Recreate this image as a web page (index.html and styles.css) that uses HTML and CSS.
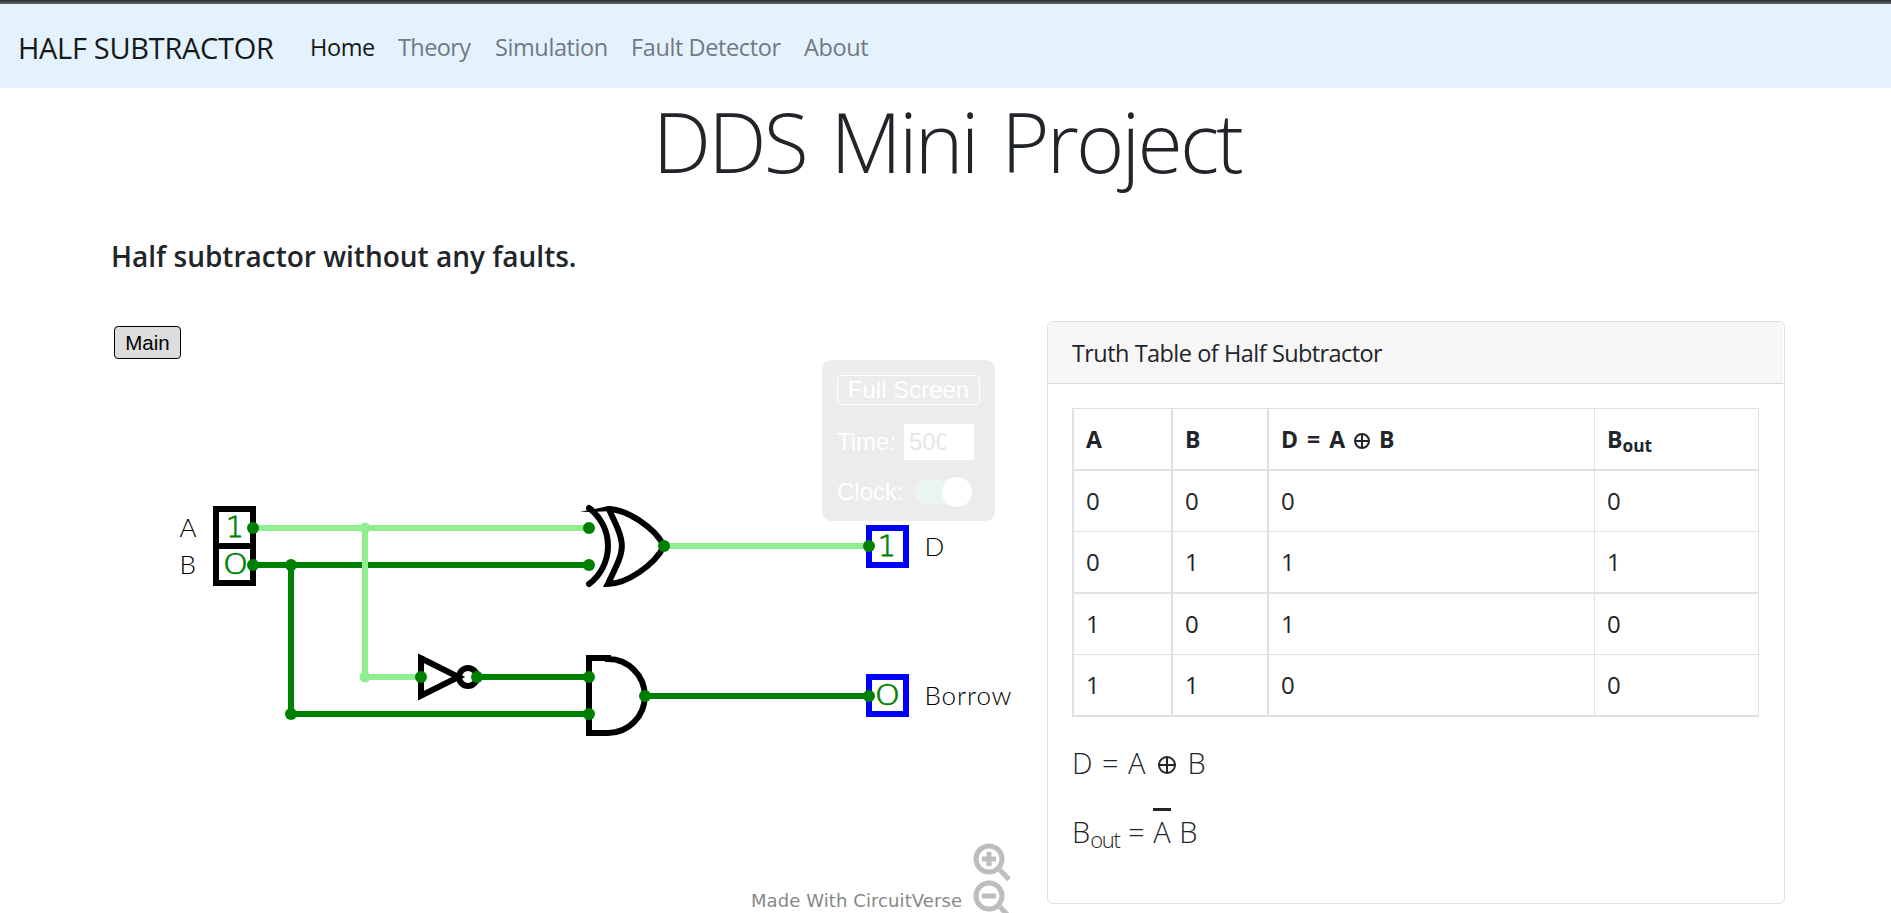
FILE: index.html
```html
<!DOCTYPE html>
<html lang="en">
<head>
<meta charset="utf-8">
<title>Half Subtractor</title>
<link rel="stylesheet" href="styles.css">
</head>
<body>
<nav class="navbar">
  <a class="brand">HALF SUBTRACTOR</a>
  <a class="link active l-home">Home</a>
  <a class="link l-theory">Theory</a>
  <a class="link l-sim">Simulation</a>
  <a class="link l-fault">Fault Detector</a>
  <a class="link l-about">About</a>
</nav>
<h1 class="title"><span>DDS Mini Project</span></h1>
<h2 class="subtitle">Half subtractor without any faults.</h2>
<main class="row">
  <section class="sim">
    <svg class="circuit" width="925" height="592" viewBox="105 321 925 592">
      <g class="wire on">
        <path d="M253 528H589M664 546H869"/>
      </g>
      <g class="wire off">
        <path d="M253 565H589M291 565V714H589M477 677H589M645 696H869"/>
      </g>
      <path class="wire on" d="M365 528V677H421"/>
      <g class="shape">
        <path d="M216 509H253V546H216ZM216 546H253V583H216Z"/>
        <path d="M421 658.3L458.5 677L421 695.7Z"/>
        <circle cx="468" cy="677" r="9"/>
        <path d="M607.8 509C626.5 509 654.6 527.5 664 546C654.6 565 626.5 584 607.8 584C626.5 546 626.5 546 607.8 507"/>
        <path class="round" d="M589 508A47.5 47.5 0 0 1 589 584"/>
        <path d="M611 658H589V733H608A36.8 37 0 0 0 608 659H605"/>
      </g>
      <path d="M580 511.8L595 509L608 506L612 511L592 512Z"/>
      <path class="out" d="M869 528H906V565H869ZM869 677H906V714H869Z"/>
      <g class="dot">
        <circle cx="253" cy="528" r="6"/><circle cx="253" cy="565" r="6"/><circle cx="291" cy="565" r="6"/><circle cx="291" cy="714" r="6"/>
        <circle cx="421" cy="677" r="6"/><circle cx="477" cy="677" r="6"/><circle cx="589" cy="528" r="6"/><circle cx="589" cy="565" r="6"/>
        <circle cx="664" cy="546" r="6"/><circle cx="589" cy="677" r="6"/><circle cx="589" cy="714" r="6"/><circle cx="645" cy="696" r="6"/>
        <circle cx="869" cy="546" r="6"/><circle cx="869" cy="696" r="6"/>
      </g>
      <g class="dot-on"><circle cx="365" cy="528" r="5.5"/><circle cx="365" cy="677" r="5.5"/></g>
      <g class="name">
        <text x="179.5" y="537">A</text><text x="179.5" y="574">B</text>
        <text x="924.5" y="556">D</text><text x="924.5" y="705" textLength="87">Borrow</text>
      </g>
      <g class="bit">
        <text x="226" y="537">1</text><text x="878" y="556">1</text>
      </g>
      <g class="bit zero">
        <text x="224" y="574" textLength="23" lengthAdjust="spacingAndGlyphs">0</text>
        <text x="876" y="705" textLength="23" lengthAdjust="spacingAndGlyphs">0</text>
      </g>
      <g class="lens">
        <circle cx="989" cy="859" r="13"/><path d="M982 859H996M989 852V866M1000 870L1009 879.500"/>
        <circle cx="989" cy="896" r="13"/><path d="M982 896H996M1000 907L1009 916.500"/>
      </g>
      <text class="credit" x="751" y="907" textLength="211">Made With CircuitVerse</text>
    </svg>
    <button class="tab">Main</button>
    <div class="panel">
      <div class="full">Full Screen</div>
      <div class="line time"><span>Time:</span><div class="input"><div class="value">500</div></div></div>
      <div class="line clock"><span>Clock:</span><div class="toggle"><div class="knob"></div></div></div>
    </div>
  </section>
  <section class="card">
    <header class="card-head"><span>Truth Table of Half Subtractor</span></header>
    <div class="card-body">
      <table class="truth">
        <tr class="r0"><th>A</th><th>B</th><th>D = A <i class="xor"></i> B</th><th>B<sub>out</sub></th></tr>
        <tr class="r1"><td>0</td><td>0</td><td>0</td><td>0</td></tr>
        <tr class="r2"><td>0</td><td>1</td><td>1</td><td>1</td></tr>
        <tr class="r1"><td>1</td><td>0</td><td>1</td><td>0</td></tr>
        <tr class="r2"><td>1</td><td>1</td><td>0</td><td>0</td></tr>
      </table>
      <p class="formula">D = A <i class="xor"></i> B</p>
      <p class="formula borrow">B<sub>out</sub> = <span class="bar">A</span> B</p>
    </div>
  </section>
</main>
</body>
</html>
```
FILE: styles.css
```css
* { box-sizing: border-box; }
body {
  margin: 0;
  height: 913px;
  overflow: hidden;
  background: #fff;
  color: #212529;
  font-family: "Open Sans", "Noto Sans", sans-serif;
  font-size: 24px;
}
.navbar {
  height: 88px;
  border-top: 2px solid #35363a;
  box-shadow: inset 0 2px #5a5b5f;
  background: #e3f2fd;
  display: flex;
  align-items: flex-start;
  padding: 26px 0 0 18px;
  white-space: nowrap;
}
.brand { width: 292px; font-size: 29px; line-height: 39px; letter-spacing: -0.3px; color: #161819; }
.link { font-size: 23.5px; line-height: 39px; color: #717a80; letter-spacing: -0.4px; }
.active { color: #16181a; }
.l-home { width: 88px; }
.l-theory { width: 97px; letter-spacing: -0.6px; }
.l-sim { width: 136px; }
.l-fault { width: 173px; }
.title {
  margin: 0;
  height: 150px;
  padding: 3px 0 0 3px;
  text-align: center;
  font-size: 82.5px;
  font-weight: 300;
  line-height: 100px;
  letter-spacing: -2.8px;
  word-spacing: 6px;
}
.subtitle {
  margin: 0;
  height: 83px;
  padding-left: 111px;
  font-size: 28px;
  font-weight: 600;
  line-height: 36px;
}
.row { display: flex; align-items: flex-start; }
.sim { position: relative; margin-left: 105px; width: 942px; height: 592px; }
.circuit { display: block; }
.wire { fill: none; stroke-width: 6; }
.on { stroke: #90ee90; }
.off { stroke: #008000; }
.shape { fill: none; stroke: #000; stroke-width: 6; }
.round { stroke-linecap: round; }
.out { fill: none; stroke: #00f; stroke-width: 6; }
.dot { fill: #008000; }
.dot-on { fill: #90ee90; }
.name { font: 300 26px Lato, sans-serif; fill: #000; }
.bit { font: 200 28px "DejaVu Sans", sans-serif; fill: #008000; stroke: #008000; stroke-width: 0.8; }
.zero { font: 300 30px Lato, sans-serif; stroke-width: 0.4; }
.lens { fill: none; stroke: #bcbdbf; stroke-width: 5; }
.credit { font: 18px "DejaVu Sans", sans-serif; fill: #888; }
.tab {
  position: absolute;
  left: 9px;
  top: 5px;
  width: 67px;
  height: 33px;
  padding: 0;
  border: 1px solid #000;
  border-radius: 4px;
  background: #ddd;
  color: #000;
  font: 20.5px/31px "Liberation Sans", sans-serif;
}
.panel {
  position: absolute;
  left: 717px;
  top: 39px;
  width: 173px;
  height: 161px;
  padding: 15px;
  border-radius: 9px;
  background: #ececec;
  color: #fff;
  font: 24px "Liberation Sans", sans-serif;
}
.full { height: 30px; border: 1px solid #fff; border-radius: 4px; text-align: center; line-height: 28px; }
.line { display: flex; align-items: center; justify-content: space-between; }
.time { height: 36px; margin-top: 19px; padding-right: 6px; }
.input { width: 70px; height: 36px; padding-left: 5px; background: #fff; color: #e6e6e6; line-height: 36px; }
.value { width: 37px; overflow: hidden; }
.clock { height: 30px; margin-top: 17px; padding-right: 8px; }
.toggle { width: 57px; height: 26px; border-radius: 13px; background: #e9f5f0; display: flex; align-items: center; justify-content: flex-end; }
.knob { width: 30px; height: 30px; flex: none; border-radius: 50%; background: #fff; }
.card { width: 738px; height: 583px; border: 1px solid #dfdfdf; border-radius: 6px; }
.card-head {
  height: 62px;
  margin-right: 1px;
  padding-left: 24px;
  background: #f7f7f7;
  border-bottom: 1px solid #d8d8d8;
  border-radius: 5px 5px 0 0;
  font-size: 23.5px;
  line-height: 63px;
  letter-spacing: -0.6px;
  word-spacing: 0.5px;
}
.card-body { padding: 24px; }
.truth { width: 687px; table-layout: fixed; border-collapse: separate; border-spacing: 0; }
.truth th, .truth td {
  padding: 0 0 0 12px;
  text-align: left;
  line-height: 58px;
  border: 0 solid #dee2e6;
  border-right-width: 2px;
  border-bottom-width: 1px;
  height: 61px;
}
.truth th { border-top-width: 1px; border-bottom-width: 2px; height: 63px; font-weight: 700; font-size: 23px; word-spacing: 3px; }
.truth .r2 td { border-bottom-width: 2px; height: 62px; }
.truth tr > :first-child { border-left-width: 2px; width: 101px; }
.truth tr > :nth-child(2) { width: 96px; }
.truth tr > :nth-child(3) { border-right-width: 1px; }
.truth tr > :nth-child(4) { border-right-width: 1px; width: 164px; }
sub { font-size: 75%; line-height: 0; position: relative; vertical-align: baseline; bottom: -0.25em; }
.xor {
  display: inline-block;
  width: 16px;
  height: 16px;
  border: 2px solid #212529;
  border-radius: 50%;
  vertical-align: -1px;
  background: linear-gradient(#212529, #212529) center / 2px 100% no-repeat, linear-gradient(#212529, #212529) center / 100% 2px no-repeat;
}
.formula { margin: 26px 0 0; height: 41px; font-size: 29px; font-weight: 300; line-height: 40px; word-spacing: 2px; }
.formula .xor { width: 18px; height: 18px; margin: 0 2px 0 3px; vertical-align: 0; }
.formula sub { font-size: 22px; letter-spacing: -1.3px; bottom: -0.22em; }
.borrow { margin-top: 24px; word-spacing: 1px; }
.bar { display: inline-block; line-height: 48px; background: linear-gradient(#212529, #212529) 0 0 / 100% 3px no-repeat; }
```
